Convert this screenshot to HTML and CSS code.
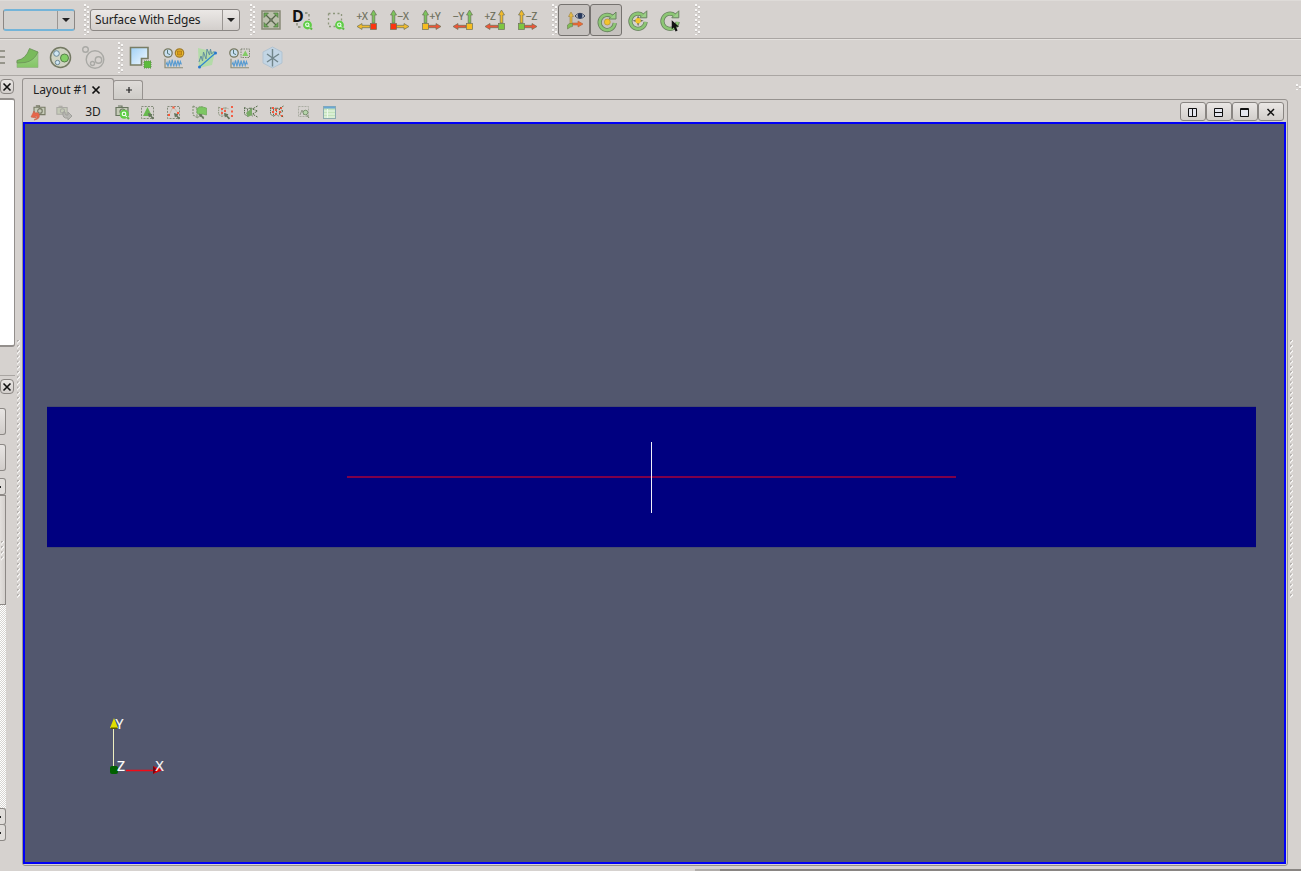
FILE: index.html
```html
<!DOCTYPE html>
<html lang="en">
<head>
<meta charset="utf-8">
<title>Layout</title>
<link rel="stylesheet" href="styles.css">
</head>
<body>
<svg class="defs" width="0" height="0">
  <defs>
    <linearGradient id="gGreen" x1="0" y1="0" x2="0" y2="1"><stop offset="0" stop-color="#a5d390"/><stop offset="1" stop-color="#83c565"/></linearGradient>
    <linearGradient id="gBlue" x1="0" y1="0" x2="1" y2="1"><stop offset="0" stop-color="#9fd0f5"/><stop offset="1" stop-color="#f4faff"/></linearGradient>
    <symbol id="mag" viewBox="0 0 10 10"><circle cx="4.5" cy="4.5" r="4.4" fill="#5fcd45"/><circle cx="4.3" cy="4.2" r="1.7" fill="none" stroke="#f0fff0" stroke-width="1.1"/><path d="M5.5 5.5l1.500 1.500" stroke="#f0fff0"/><path d="M7.500 7.500L9 9" stroke="#58bc40" stroke-width="2"/></symbol>
    <symbol id="axisL" viewBox="0 0 32 32"><path class="up" d="M22.5 6l3 5h-1.700v8h-2.6v-8H19.500z"/><path class="side" d="M6 22.500l5-3v1.800h8v2.400h-8v1.800z"/><rect class="sq" x="19.5" y="19.5" width="6" height="6"/></symbol>
    <symbol id="axisR" viewBox="0 0 32 32"><path class="up" d="M10.5 6l3 5h-1.700v8H9.2v-8H7.500z"/><path class="side" d="M26 22.500l-5-3v1.800h-8v2.400h8v1.800z"/><rect class="sq" x="7.5" y="19.5" width="6" height="6"/></symbol>
    <symbol id="rot" viewBox="0 0 32 32"><path d="M22 12.500A7.600 7.600 0 1 0 24.800 19" fill="none" stroke="#698260" stroke-width="4.200"/><path d="M26 8v7h-7l2-2.500L24 10z" fill="#9bcf87" stroke="#698260"/><path d="M22 12.500A7.600 7.600 0 1 0 24.800 19" fill="none" stroke="#8cc674" stroke-width="2.600"/></symbol>
    <symbol id="cursor" viewBox="0 0 10 12"><path d="M0 0v9.5l2.3-2 1.8 4 2-1-1.8-3.8h3.2z" fill="#111"/></symbol>
    <symbol id="clock" viewBox="0 0 12 12"><circle cx="6" cy="6" r="4.2" fill="#c9dff0" stroke="#77785f" stroke-width="1.3"/><path d="M5.5 3v3.5L8 7.6" fill="none" stroke="#577"/></symbol>
    <symbol id="wave" viewBox="0 0 20 10"><path d="M1 0v9.3h18" fill="none" stroke="#8c8d78" stroke-width="1.2"/><path d="M2 6l1-2 1 4 1.5-6L7 8l1.2-7 1.5 7 1.5-6 1.2 6 1.5-6 1.3 5 1.2-4 1 3" fill="none" stroke="#5a9cd0" stroke-width="1.1"/></symbol>
    <symbol id="dash" viewBox="0 0 16 16"><rect x="1.5" y="1.5" width="12" height="12" fill="none" stroke="#848b7b" stroke-dasharray="2 1.2"/></symbol>
    <symbol id="hand" viewBox="0 0 8 8"><path d="M0 0l1 5 1.500-1L5.500 7.500 7 6 4 3 5 1.500z" fill="#65745c"/></symbol>
    <symbol id="cam" viewBox="0 0 14 12"><path d="M1 2.500h12v8H1zM3 1h4v1.500" fill="#c5cab8" stroke="currentColor" stroke-width="1.200"/><circle cx="7.500" cy="6.500" r="2.500" fill="none" stroke="currentColor" stroke-width="1.200"/></symbol>
    <symbol id="mesh" viewBox="0 0 16 16"><path d="M2 2l4 2 4-1.500 4 1.500M2 2v9l4 2.500V4M6 13.500l4-2 3 2M10 3v8" fill="none" stroke="currentColor" stroke-width="1.200" stroke-dasharray="2 1"/></symbol>
  </defs>
</svg>

<div class="toolbar top">
  <div class="combo focus"><span class="value"></span><span class="drop"></span></div>
  <i class="grip g1"></i>
  <div class="combo repr"><span class="value">Surface With Edges</span><span class="drop"></span></div>
  <i class="grip g2"></i>
  <svg class="btn" viewBox="0 0 32 32"><rect x="7" y="7" width="18" height="18" fill="#bcc0ad" stroke="#898b78" stroke-width="1.5"/><path d="M10 10l12 12M22 10L10 22" stroke="#56644a" stroke-width="1.300"/><path d="M9 9h4.500l-4.500 4.500zM23 9h-4.500l4.500 4.500zM9 23h4.500l-4.500-4.500zM23 23h-4.500l4.500-4.500z" fill="#6fae58" stroke="#4b6840" stroke-width=".6"/><circle cx="16" cy="16" r="1.700" fill="#6b7660"/></svg>
  <svg class="btn" viewBox="0 0 32 32"><path d="M10 19v4h4M18 9h4v7" fill="none" stroke="#838972" stroke-width="1.3" stroke-dasharray="2.500 2.500"/><text class="dee" x="5" y="18">D</text><use href="#mag" x="16" y="16.500" width="10" height="10"/></svg>
  <svg class="btn" viewBox="0 0 32 32"><path d="M9.500 9.500h13v7M9.500 9.500v13h7" fill="none" stroke="#8d967c" stroke-width="1.300" stroke-dasharray="2 2.500"/><use href="#mag" x="16" y="16.500" width="10" height="10"/></svg>
  <svg class="btn ax-x" viewBox="0 0 32 32"><use href="#axisL"/><text class="axis" x="5.500" y="16">+X</text></svg>
  <svg class="btn ax-x" viewBox="0 0 32 32"><use href="#axisR"/><text class="axis" x="14.500" y="16">−X</text></svg>
  <svg class="btn ax-y" viewBox="0 0 32 32"><use href="#axisR"/><text class="axis" x="14.500" y="16">+Y</text></svg>
  <svg class="btn ax-y" viewBox="0 0 32 32"><use href="#axisL"/><text class="axis" x="6" y="16">−Y</text></svg>
  <svg class="btn ax-z" viewBox="0 0 32 32"><use href="#axisL"/><text class="axis" x="5.500" y="16">+Z</text></svg>
  <svg class="btn ax-z" viewBox="0 0 32 32"><use href="#axisR"/><text class="axis" x="15" y="16">−Z</text></svg>
  <i class="grip g3"></i>
  <div class="toggle"><svg viewBox="0 0 32 32"><path d="M25 20l-5-3v2h-7v2h7v2z" fill="#ee6a32" stroke="#a76543" stroke-width=".6"/><path d="M13 8l2.500 4.500H14V20h-2v-7.500h-1.500z" fill="#e5b944" stroke="#a08442" stroke-width=".6"/><path d="M11.500 19.500h3v3l-2 .5-3 2v-4z" fill="#7fbd55" stroke="#6b7c51" stroke-width=".6"/><path d="M17 12q5-5.500 10 0q-5 5-10 0z" fill="#dce0e4" stroke="#34405a"/><circle cx="22" cy="11.800" r="2.500" fill="#26385c"/></svg></div>
  <div class="toggle"><svg viewBox="0 0 32 32"><use href="#rot"/><circle cx="17.300" cy="18" r="3" fill="#f4c42c" stroke="#ae8b2c" stroke-width=".6"/></svg></div>
  <svg class="btn" viewBox="0 0 32 32"><g transform="translate(-1.200 -1.200)"><use href="#rot" width="32" height="32"/><path d="M17.300 12.500l1.500 4 4 1.500-4 1.500-1.500 4-1.500-4-4-1.500 4-1.500z" fill="#6b6f5c"/><circle cx="17.300" cy="18" r="2.700" fill="#f4c42c"/></g></svg>
  <svg class="btn" viewBox="0 0 32 32"><g transform="translate(-1.200 -1.200)"><use href="#rot" width="32" height="32"/></g><use href="#cursor" x="17.500" y="16" width="10" height="12"/></svg>
  <i class="grip g4"></i>
</div>

<div class="toolbar second">
  <div class="lines"><b></b><b></b><b></b></div>
  <svg class="btn" viewBox="0 0 33 33"><path d="M6 19.500Q15 19 18.500 9l8.500 2v15.500H6z" fill="url(#gGreen)" stroke="#8dab7e" stroke-width=".6"/><path d="M6 19.500Q15 18 18.500 7.500l8.500 3.500Q23 20 14 21.500l-8 .5z" fill="#79ba5c" stroke="#6b9058" stroke-width=".8"/></svg>
  <svg class="btn" viewBox="0 0 33 33"><circle cx="16.500" cy="16.500" r="10" fill="#d0d4c3" stroke="#747963" stroke-width="1.500"/><circle cx="20.500" cy="17" r="4" fill="#82cf66" stroke="#587f4a"/><circle cx="12.500" cy="12.500" r="2.800" fill="#cfe6f3" stroke="#6b8796"/><circle cx="13.500" cy="21.500" r="2.200" fill="#cfe6f3" stroke="#6b8796"/></svg>
  <svg class="btn" viewBox="0 0 33 33"><g fill="none" stroke="#a9a9a5" stroke-width="1.400"><circle cx="18" cy="18.500" r="8.800"/><circle cx="8.500" cy="8.500" r="2.800"/><circle cx="21.500" cy="19" r="3.200"/><circle cx="15.500" cy="22.500" r="2"/></g></svg>
  <i class="grip g5"></i>
  <svg class="btn" viewBox="0 0 33 33"><path d="M6.500 6.500h17.500v11h-6.500v6.500h-11z" fill="url(#gBlue)" stroke="#797d64" stroke-width="1.600"/><rect x="20" y="20" width="7" height="7" fill="#5dbb3c" stroke="#638b50" stroke-dasharray="1 1"/></svg>
  <svg class="btn" viewBox="0 0 33 33"><use href="#clock" x="5" y="6" width="12" height="12"/><circle cx="22.500" cy="12" r="4.200" fill="#edbd2e" stroke="#a27b2a" stroke-width="1.200"/><path d="M20.500 10h4v4h-4z" fill="#d99a15" stroke="#a37218" stroke-width=".7"/><use href="#wave" x="7" y="17.500" width="20" height="10"/></svg>
  <svg class="btn" viewBox="0 0 33 33"><path d="M8 7l17 4-3 13-13 3z" fill="#b3dba8"/><path d="M9 21l2-6 1.500 5 1-9 2.500 7 1-10 2.500 6 1-6 1 5 3-3" fill="none" stroke="#638fa0"/><path d="M9.500 26L25.500 12" stroke="#2c83d2" stroke-width="1.100"/><circle cx="9.500" cy="26" r="1.500" fill="#2676cc"/><circle cx="25.500" cy="12" r="1.500" fill="#2676cc"/></svg>
  <svg class="btn" viewBox="0 0 33 33"><use href="#clock" x="5" y="6" width="12" height="12"/><rect x="18" y="8" width="8.500" height="8.500" fill="none" stroke="#7c8370" stroke-dasharray="1.500 1"/><path d="M22.300 9.500l3 5.500h-6z" fill="#82cb65"/><use href="#wave" x="7" y="17.500" width="20" height="10"/></svg>
  <svg class="btn" viewBox="0 0 33 33"><path d="M16.500 6l9.500 5v11l-9.500 5L7 22V11z" fill="#c2d5e4" stroke="#b2c3d1"/><path d="M16.500 8v17.500M11 13l11 8M23 13l-12 8" stroke="#71858a" stroke-width="1.400"/></svg>
</div>

<div class="workspace">
  <aside class="dock">
    <div class="column">
      <button class="close c1"><svg viewBox="0 0 14 14"><path d="M3.500 3.500l7 7M10.500 3.500l-7 7"/></svg></button>
      <div class="tree"></div>
      <hr>
      <button class="close c2"><svg viewBox="0 0 14 14"><path d="M3.500 3.500l7 7M10.500 3.500l-7 7"/></svg></button>
      <div class="stub s1"></div><div class="stub s2"></div>
      <div class="scroll"><div class="arrow a1"></div><div class="thumb"><i class="ticks"></i></div><div class="track"></div><div class="arrow a2"></div><div class="arrow a3"></div></div>
    </div>
    <i class="ticks splitter"></i>
  </aside>
  <main>
    <div class="tabs">
      <div class="tab active"><span>Layout #1</span><svg viewBox="0 0 10 10" width="10" height="10"><path d="M1.500 1.500l7 7M8.500 1.500l-7 7" stroke="#111" stroke-width="1.700"/></svg></div>
      <div class="tab add"><svg viewBox="0 0 8 8" width="8" height="8"><path d="M4 1v6M1 4h6" stroke="#222" stroke-width="1.200"/></svg></div>
    </div>
    <section class="panel">
      <div class="viewbar">
        <svg viewBox="0 0 26 22" color="#777a65"><use href="#cam" x="8" y="4" width="13" height="11"/><path d="M9 19q7-1 5-6-1-2-4-1l-1-2-3 6 5 1-1-2q2 0 2 1 0 2-3 3z" fill="#e8654a" stroke="#c86045" stroke-width=".6"/></svg>
        <svg viewBox="0 0 26 22" color="#aaa9a4"><use href="#cam" x="5" y="4" width="12" height="11"/><path d="M12 11q-1 7 5 6v2l4-4-4-4v3q-3 1-3-3z" fill="#b8b7b3" stroke="#a0a09b"/></svg>
        <span class="mode">3D</span>
        <svg viewBox="0 0 26 22" color="#697560"><use href="#cam" x="6" y="4" width="14" height="12"/><use href="#mag" x="10.500" y="8.500" width="10.500" height="10.500"/></svg>
        <svg viewBox="0 0 26 22"><use href="#dash" x="5" y="4" width="16" height="16"/><path d="M12.500 6l4.500 9H8z" fill="#68b94f"/><use href="#hand" x="13" y="12" width="7" height="7"/></svg>
        <svg viewBox="0 0 26 22"><use href="#dash" x="5" y="4" width="16" height="16"/><path d="M8 14l4-8 6 7" fill="none" stroke="#c8b8a8"/><path d="M7 13h2v2H7zM11.500 5.500h2v2h-2zM16 11h2v2h-2z" fill="#ff5535"/><use href="#hand" x="13" y="12" width="7" height="7"/></svg>
        <svg viewBox="0 0 26 22" color="#8b987f"><use href="#mesh" x="4" y="3" width="16" height="16"/><path d="M10 8q3-3 5-2l4.500 1v7l-4-1-3 1-2.500-2z" fill="#7dc763" stroke="#6caa56" stroke-width=".7"/><use href="#hand" x="12" y="12" width="6" height="7"/></svg>
        <svg viewBox="0 0 26 22" color="#8c9680"><use href="#mesh" x="4" y="3" width="13" height="16"/><path d="M8 7h2v2H8zM8 11h2v2H8zM11 9h2v2h-2zM18 5h2v2h-2zM18 9.500h2v2h-2zM18 14h2v2h-2z" fill="#f15e45"/><use href="#hand" x="11" y="12" width="7" height="7"/></svg>
        <svg viewBox="0 0 26 22" color="#4d6344"><use href="#mesh" x="4" y="3" width="12" height="16"/><path d="M7 12l6-5v7l-4 2z" fill="#78aa65"/><path d="M18.500 5l-5 3 5 2-5 3 5 3" fill="none" stroke="#526b46" stroke-dasharray="2 1"/></svg>
        <svg viewBox="0 0 26 22" color="#536248"><use href="#mesh" x="4" y="3" width="12" height="16"/><path d="M7 6h2v2H7zM10 8h2v2h-2zM7 10h2v2H7zM10 12h2v2h-2zM15 6h2v2h-2zM14 10h2v2h-2zM16 14h2v2h-2z" fill="#f4553c"/><path d="M18.500 5l-5 3 5 2-5 3 5 3" fill="none" stroke="#526b46" stroke-dasharray="1.500 1.500"/></svg>
        <svg viewBox="0 0 26 22"><rect x="7.500" y="5.500" width="10" height="10" fill="none" stroke="#aaada2" stroke-dasharray="2 1"/><path d="M9 14l2-5 2 5 2-5" fill="none" stroke="#939989"/><circle cx="14.500" cy="11.500" r="2.300" fill="#b6d5aa" stroke="#7c9672"/><path d="M15 13l3 4" stroke="#788a6b"/></svg>
        <svg viewBox="0 0 26 22"><rect x="6.500" y="5.500" width="12" height="12" fill="#c5e4bb" stroke="#8caab0"/><path d="M7 6.500h11" stroke="#6ba7d5" stroke-width="2"/><path d="M7 10h11M7 13h11M7 16h11M10.500 8v9" stroke="#edf8ec"/></svg>
        <div class="window-buttons">
          <button><svg viewBox="0 0 10 10"><path d="M.5 1.500h8v8h-8zM4.500 1.500v8"/></svg></button>
          <button><svg viewBox="0 0 10 10"><path d="M.5 1.500h8v8h-8zM.5 5.500h8"/></svg></button>
          <button><svg viewBox="0 0 10 10"><path d="M.5 1.500h8v8h-8zM.5 2.500h8"/></svg></button>
          <button><svg viewBox="0 0 10 10"><path d="M1.500 2l6.500 6.500M8 2L1.500 8.500" stroke-width="1.500"/></svg></button>
        </div>
      </div>
      <div class="view">
        <svg viewBox="25 124 1259 738">
          <rect x="47" y="407" width="1209" height="140" fill="#000080"/>
          <path d="M47 406.500h1209M47 547.500h1209" stroke="#464b6d"/>
          <path d="M347 477h609" stroke="#a80038" stroke-width="1.500"/>
          <path d="M651.500 442v71" stroke="#f0f0fa"/>
          <path d="M113.500 729v37" stroke="#eeeec0"/>
          <path d="M110 728l4-10 4 10z" fill="#e0df00"/><path d="M111 727.500h6v1.500h-6z" fill="#5d5900"/>
          <path d="M126 770.500h30" stroke="#f30b17" stroke-width="1.500"/>
          <path d="M153 766l10 4-10 4z" fill="#e80007"/><path d="M153 766l4 4-4 4z" fill="#6f0710"/>
          <rect x="110" y="766" width="8" height="8" rx="2" fill="#006000"/>
          <g class="axes"><text x="115.500" y="729">Y</text><text x="117" y="770.500">Z</text><text x="155.500" y="771">X</text></g>
        </svg>
      </div>
    </section>
    <div class="status"><i></i></div>
  </main>
  <aside class="right"><i class="grip mini"></i><i class="ticks"></i></aside>
</div>
</body>
</html>
```
FILE: styles.css
```css
* { box-sizing: border-box; }
body { margin: 0; width: 1301px; height: 871px; overflow: hidden; display: flex; flex-direction: column; background: #d6d2cf; color: #222; font: 12px "Noto Sans", sans-serif; }
svg { display: block; flex: none; }
.defs { position: absolute; }
button { padding: 0; background: linear-gradient(#eae7e5, #d2cecb); border: 1px solid #898582; border-radius: 3px; }
.toolbar { display: flex; align-items: center; flex: none; border-bottom: 1px solid #aaa6a3; }
.top { height: 39px; border-top: 1px solid #dedbd8; padding-left: 3px; box-shadow: 0 1px #e5e2df; }
.second { height: 37px; }
.top .btn { width: 32px; height: 32px; }
.second .btn { width: 33px; height: 33px; }
.combo { display: flex; height: 22px; width: 72px; border: 1px solid #8b8784; border-radius: 3px; background: linear-gradient(#ebe8e6, #d3cfcc); }
.combo.focus { border-top: 2px solid #74b4d8; border-bottom: 2px solid #74b4d8; background: #d2d1cf; }
.combo.repr { width: 150px; }
.value { flex: 1; padding-left: 4px; line-height: 19px; font-size: 12px; letter-spacing: -.18px; white-space: nowrap; }
.drop { width: 17px; border-left: 1px solid #9a9693; display: flex; justify-content: center; align-items: center; }
.drop::after { content: ""; border: 4px solid transparent; border-top-color: #222; border-bottom: 0; }
.grip { width: 6px; height: 31px; flex: none; background: repeating-linear-gradient(180deg, #f8f7f6 0 2px, #c3bfbc 2px 3px, transparent 3px 5px) 0 0 / 2px 100% no-repeat, repeating-linear-gradient(180deg, transparent 0 2px, #f8f7f6 2px 4px, #c3bfbc 4px 5px) 3px 0 / 2px 100% no-repeat; }
.g1 { margin-left: 9px; }
.g2 { margin: 0 -1px 0 10px; }
.g3 { margin: 0 0 0 9px; }
.g4 { margin-left: 9px; }
.g5 { margin: 0 0 0 8px; }
.toggle { width: 32px; height: 32px; border: 1px solid #75726f; border-radius: 3px; background: #c6c2bf; }
.toggle svg { width: 32px; height: 32px; margin: -1px; }
.dee { font: bold 16px "Noto Sans", sans-serif; fill: #111; }
.axis { font: 10px "Open Sans", sans-serif; letter-spacing: -.3px; fill: #686a55; stroke: #686a55; stroke-width: .2px; }
.up, .side, .sq { stroke: #6d7157; stroke-width: .7px; }
.ax-x { --up: #7bc45c; --side: #efb92d; --sq: #fb3510; }
.ax-y { --up: #7bc45c; --side: #ec5638; --sq: #f7bd20; }
.ax-z { --up: #efb92d; --side: #ec5638; --sq: #7ec642; }
.up { fill: var(--up); }
.side { fill: var(--side); }
.sq { fill: var(--sq); }
.lines { width: 11px; display: flex; flex-direction: column; gap: 4px; }
.lines b { width: 5px; height: 2px; background: #96958b; }
.workspace { flex: 1; display: flex; min-height: 0; }
.dock { width: 22px; display: flex; flex: none; }
.column { width: 15px; display: flex; flex-direction: column; }
.column > * { flex: none; }
.close { width: 14px; height: 15px; border-radius: 4px; }
.close svg { width: 14px; height: 14px; margin: -.5px 0 0 -1px; stroke: #111; stroke-width: 1.6; }
.c1 { margin-top: 3px; }
.tree { margin-top: 4px; height: 249px; background: #fff; border: solid #938f8c; border-width: 2px 1px 2px 0; border-radius: 0 3px 3px 0; }
hr { width: 15px; margin: 28px 0 0; border: 0; border-top: 1px solid #aaa6a3; }
.c2 { margin-top: 3px; }
.stub { width: 6px; height: 27px; border: 1px solid #8c8885; border-left: 0; border-radius: 0 3px 3px 0; background: linear-gradient(#e8e5e3, #d1cdca); }
.s1 { margin-top: 14px; }
.s2 { margin-top: 9px; }
.scroll { margin-top: 7px; width: 6px; display: flex; flex-direction: column; }
.arrow { height: 17px; background: #e0ddda; border: 1px solid #8c8885; border-left: 0; border-radius: 0 3px 3px 0; }
.arrow::before { content: ""; display: block; width: 1px; height: 2px; margin-top: 7px; background: #222; }
.thumb { height: 110px; background: linear-gradient(90deg, #e3e0dd, #d4d0cd); border: 1px solid #8c8885; border-left: 0; padding: 45px 0 0 1px; }
.track { height: 203px; background: repeating-conic-gradient(#fff 0 25%, #d7d4d0 0 50%) 0 0 / 2px 2px; }
.a3 { margin-top: -1px; }
.ticks { display: block; width: 3px; height: 258px; background: linear-gradient(135deg, #b2aeab 1.6px, #f8f7f6 2px 2.9px, transparent 3.2px) 0 0 / 3px 5.2px; }
.thumb .ticks { height: 20px; }
.splitter { margin: 264px 0 0 2px; }
main { width: 1266px; display: flex; flex-direction: column; }
.tabs { height: 23px; padding-top: 2px; display: flex; align-items: flex-end; flex: none; }
.tab { border: 1px solid #96928f; border-bottom: 0; border-radius: 3px 3px 0 0; display: flex; align-items: center; }
.active { width: 92px; height: 22px; padding-left: 10px; gap: 3px; background: #d6d2cf; margin-bottom: -1px; z-index: 1; font-size: 12px; }
.active span { width: 55px; white-space: nowrap; letter-spacing: -.1px; }
.add { width: 30px; height: 19px; margin-left: -1px; padding-left: 2px; justify-content: center; background: linear-gradient(#dedbd8, #ceccc8); }
.panel { height: 767px; border: 1px solid #96928f; border-radius: 0 3px 3px 3px; display: flex; flex-direction: column; flex: none; }
.viewbar { height: 22px; display: flex; align-items: center; padding: 1px 3px 0 2px; flex: none; }
.viewbar > svg { width: 26px; height: 22px; }
.mode { width: 32px; text-align: center; font-size: 12px; }
.window-buttons { margin-left: auto; display: flex; }
.window-buttons button { width: 26px; height: 19px; display: flex; align-items: center; justify-content: center; }
.window-buttons svg { width: 10px; height: 10px; fill: #e3e5ed; stroke: #111; }
.view { height: 742px; width: 1263px; border: 2px solid #0000f5; background: #52576e; }
.view svg { width: 1259px; height: 738px; }
.axes { font: 14px "Open Sans", sans-serif; fill: #fff; stroke: #fff; stroke-width: .2px; }
.status { margin: 3px -14px 0 673px; height: 2px; background: #898582; }
.status i { display: block; width: 25px; height: 2px; background: #b0aca9; }
.right { width: 13px; }
.right .grip { display: block; height: 6px; margin: 8px 0 0 8px; }
.right .ticks { margin: 250px 0 0 2px; }
```
